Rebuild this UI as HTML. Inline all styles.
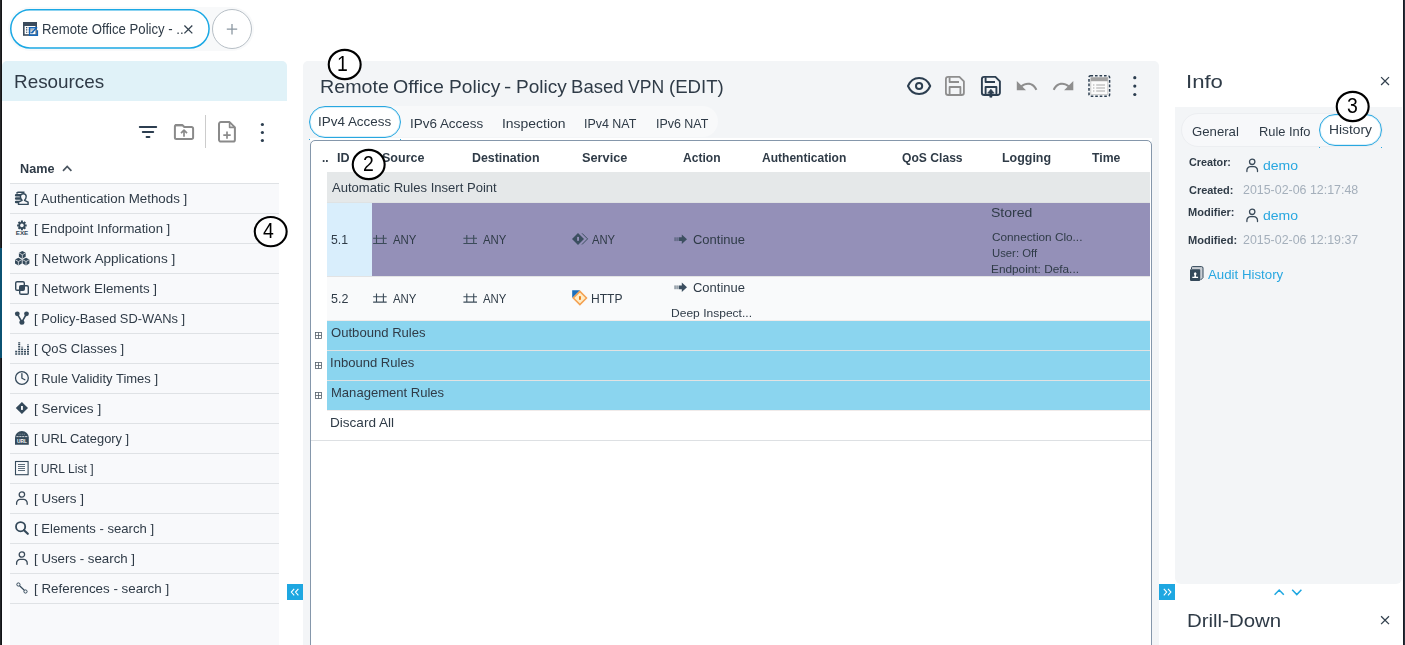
<!DOCTYPE html>
<html lang="en"><head><meta charset="utf-8"><title>Remote Office Policy - Policy Based VPN (EDIT)</title>
<style>
html,body{margin:0;padding:0;background:#fff;}
body{width:1405px;height:645px;overflow:hidden;font-family:"Liberation Sans",sans-serif;color:#2f3b47;}
#app{position:relative;width:1405px;height:645px;overflow:hidden;background:#fff;}
#app div,#app span,#app svg{position:absolute;box-sizing:border-box;}
.t{white-space:pre;line-height:1;transform-origin:0 0;}
.edgeL{left:0;top:0;width:2px;height:645px;background:linear-gradient(90deg,#262729 0,#262729 50%,#141517 50%);}
.edgeL i{position:absolute;left:0;width:2px;top:248px;height:110px;background:#0b5272;}
.edgeR{left:1403px;top:0;width:2px;height:645px;background:linear-gradient(90deg,#181c25 0,#181c25 50%,#2a303a 50%);}
.tabsbg{left:8px;top:7px;width:246px;height:44px;border-radius:22px;background:#f8f9fa;}
.maintab{left:10px;top:9px;width:200px;height:40px;border-radius:20px;background:#fff;}
.plus{left:212px;top:9px;width:40px;height:40px;border-radius:20px;border:1px solid #b7bfc6;background:#fff;}
.reshead{left:2px;top:61px;width:285px;height:40px;background:#e0f2f8;border-radius:5px 5px 0 0;}
.vdiv{left:205px;top:115px;width:1px;height:33px;background:#cccccc;}
.list{left:10px;top:183px;width:269px;height:462px;background:#f8f9fb;}
.list div{left:0;width:269px;height:1px;background:#dfe2e5;}
.cpanel{left:303px;top:61px;width:856px;height:600px;background:#f3f5f7;border-radius:5px 5px 0 0;}
.ctabs{left:309px;top:106px;width:409px;height:31px;border-radius:16px;background:#f8f9fa;}
.pill{border:1px solid #28a7e0;background:#fff;border-radius:17px;box-shadow:inset 0 0 0 1px rgba(40,167,224,.18);}
.table{left:310px;top:140px;width:842px;height:520px;border:1px solid #8597ab;border-radius:5px 5px 0 0;background:#fff;}
.row{left:327px;width:823px;}
.ipanel{left:1175px;top:107px;width:227px;height:477px;background:#f3f5f7;border-radius:0 0 6px 6px;}
.itabs{left:1181px;top:113px;width:202px;height:34px;border-radius:17px;background:#f7f8fa;border:1px solid #eceef1;}
.btn{width:16px;height:16px;background:#1ea7e1;}
#texts{left:0;top:0;width:1405px;height:645px;will-change:transform;}

</style></head>
<body>
<div id="app">
<div class="tabsbg"></div>
<div class="maintab"></div>
<div class="plus"></div>
<div class="reshead"></div>
<div class="vdiv"></div>
<div class="list">
<div style="top:0"></div><div style="top:30px"></div><div style="top:60px"></div><div style="top:90px"></div><div style="top:120px"></div><div style="top:150px"></div><div style="top:180px"></div><div style="top:210px"></div><div style="top:240px"></div><div style="top:270px"></div><div style="top:300px"></div><div style="top:330px"></div><div style="top:360px"></div><div style="top:390px"></div><div style="top:420px"></div>
</div>
<div class="cpanel"></div>
<div class="ctabs"></div>
<div class="pill" style="left:309px;top:106px;width:92px;height:32px;"></div>
<div style="left:310px;top:138px;width:842px;height:3px;background:#fff"></div>
<div style="left:309px;top:139px;width:1px;height:1px;background:#28a7e0"></div><div style="left:400px;top:139px;width:1px;height:1px;background:#28a7e0"></div>
<div class="table"></div>
<div class="row" style="top:172px;height:31px;background:#e5e8e9;border-bottom:1px solid #dfe2e3"></div>
<div class="row" style="top:203px;height:73px;background:#9490b8;"></div>
<div class="row" style="top:203px;height:73px;width:45px;background:#d9eefc;"></div>
<div class="row" style="top:276px;height:1px;background:#e2e3e4;"></div>
<div class="row" style="top:277px;height:43px;background:#f9fafb;"></div>
<div class="row" style="top:320px;height:1px;background:#f0ebea;"></div>
<div class="row" style="top:321px;height:29px;background:#8bd5ef;"></div>
<div class="row" style="top:350px;height:1px;background:#e2e2e2;"></div>
<div class="row" style="top:351px;height:29px;background:#8bd5ef;"></div>
<div class="row" style="top:380px;height:1px;background:#e2e2e2;"></div>
<div class="row" style="top:381px;height:29px;background:#8bd5ef;"></div>
<div class="row" style="top:410px;height:1px;background:#f0ebea;"></div>
<div style="left:311px;top:440px;width:840px;height:1px;background:#dde0e3;"></div>
<div class="ipanel"></div>
<div class="itabs"></div>
<div class="pill" style="left:1319px;top:114px;width:63px;height:32px;border-radius:16px"></div>
<div style="left:1319px;top:147px;width:1px;height:1px;background:#28a7e0"></div><div style="left:1381px;top:147px;width:1px;height:1px;background:#28a7e0"></div>
<div class="btn" style="left:287px;top:584px"></div>
<div class="btn" style="left:1159px;top:584px"></div>
<div class="edgeL"><i></i></div>
<div class="edgeR"></div>
<svg id="icons" width="1405" height="645" viewBox="0 0 1405 645" style="left:0;top:0">
<defs>
<g id="usr" fill="none" stroke="#3a4a59" stroke-width="1.3" stroke-linecap="round"><circle cx="6" cy="3.4" r="2.7"/><path d="M0.7 13.2v-1.3a3.6 3.6 0 0 1 3.6-3.6h3.4a3.6 3.6 0 0 1 3.6 3.6v1.3"/></g>
<g id="net" fill="none" stroke="#3c4c5a" stroke-width="1.1"><path d="M0 3.2h13.6M0 8.5h13.6M3.4 0v8.5M10.3 0v8.5"/></g>
<g id="arr" fill="#3c4f60"><rect x="0" y="2.8" width="0.9" height="3.8"/><rect x="2" y="2.8" width="0.9" height="3.8"/><path d="M4 2.8h3.2V0L12.4 4.7 7.2 9.4V6.6H4z"/></g>
<g id="cube"><path d="M0-3.9L3.4-2V2L0 3.9-3.4 2V-2z" fill="#34495a"/><path d="M-3.4-2L0 0 3.4-2M0 0V3.9" stroke="#f8f9fb" stroke-width="0.7" fill="none"/></g>
<g id="xx" stroke="#34424f" stroke-width="1.3"><path d="M0.200 0.300l7.900 7.900M8.100 0.300L0.200 8.200"/></g>
</defs>
<rect x="10.750" y="9.700" width="198.300" height="38.300" rx="19.150" fill="#fff" stroke="#1ba8e4" stroke-width="1.500"/>
<!-- top tab icon -->
<g>
<rect x="23" y="22" width="14" height="13.8" fill="#3b4b5c"/>
<rect x="24.600" y="26" width="10.800" height="8.200" fill="#fff"/>
<path d="M26 27.6h1.3M26 29.9h1.3M26 32.2h1.3" stroke="#3b4b5c" stroke-width="1.1"/>
<path d="M28.6 27.6h5M28.6 29.9h5M28.6 32.2h5" stroke="#3b4b5c" stroke-width="0.9"/>
<path d="M36 27.8h-6.4v7.4h7.8v-5" fill="#fff" fill-opacity="0.250" stroke="#1566b8" stroke-width="1.400"/>
<path d="M31.4 33.2l5.6-6" stroke="#1566b8" stroke-width="1.6"/>
</g>
<use href="#xx" x="184.2" y="25.2"/>
<path d="M226.8 29.2h10.4M232 24v10.4" stroke="#8b97a1" stroke-width="1.3"/>
<!-- resources toolbar -->
<path d="M139.8 127h16.4M142.8 132h10.4M146.6 137h2.8" stroke="#2c3e50" stroke-width="2" stroke-linecap="round"/>
<g fill="none" stroke="#8a8a8a" stroke-width="2" stroke-linejoin="round">
<path d="M174.900 137.400V126.500a1.500 1.500 0 0 1 1.500-1.500h5.900l2 2h7.300a1.500 1.500 0 0 1 1.500 1.500v8.900a1.500 1.500 0 0 1-1.500 1.500h-15.200a1.500 1.500 0 0 1-1.500-1.500z"/>
<path d="M184 136.8v-6M181 133.2l3-3 3 3" stroke-width="1.7"/>
<path d="M175 125.3h7.2" stroke-width="2.2"/>
<path d="M219 124a1.9 1.9 0 0 1 1.9-1.9h8.7l5.3 5.3v12.300000000000011a1.9 1.9 0 0 1-1.9 1.9h-12.1a1.9 1.9 0 0 1-1.9-1.9z"/>
<path d="M229.6 122.2v5.2h5.3" stroke-width="1.6"/>
<path d="M223.3 135.1h7.4M227 131.4v7.4" stroke-width="1.7"/>
</g>
<g fill="#2c3e50"><circle cx="262.4" cy="124.5" r="1.6"/><circle cx="262.4" cy="132.5" r="1.6"/><circle cx="262.4" cy="140.5" r="1.6"/></g>
<path d="M63 170.8l4.2-4.300000000000011 4.2 4.300000000000011" fill="none" stroke="#4a5560" stroke-width="1.7"/>
<!-- list icons -->
<g><!-- auth -->
<path d="M16.1 195.300h6M16.100 198.600h6M16.100 201.900h4.500" stroke="#34495a" stroke-width="2.500" stroke-linecap="round"/>
<path d="M16.400 193.400l1.600-1.100h6.500" stroke="#34495a" stroke-width="1.600" fill="none"/>
<path d="M18.500 204.400v-2.300l3.600-1.800c-1.100-1-1.700-2.100-1.700-3.700a2.900 2.900 0 0 1 5.800 0c0 1.600-.6 2.700-1.700 3.700l3.600 1.800v2.300z" fill="#f8f9fb" stroke="#34495a" stroke-width="1.400" stroke-linejoin="round"/>
</g>
<g><!-- endpoint gear -->
<g stroke="#34495a" stroke-width="2"><path d="M21.9 220.6v9.6M17.1 225.4h9.6M18.5 222l6.8 6.8M25.3 222l-6.8 6.8"/></g>
<circle cx="21.9" cy="225.4" r="3.5" fill="#34495a"/><circle cx="21.9" cy="225.4" r="1.8" fill="#f8f9fb"/>
<text x="15.7" y="234.9" font-family="Liberation Sans, sans-serif" font-weight="700" font-size="5.2" fill="#34495a" textLength="12.6" lengthAdjust="spacingAndGlyphs">EXE</text>
</g>
<use href="#cube" x="22.3" y="254.8"/><use href="#cube" x="18.4" y="261.6"/><use href="#cube" x="26" y="261.6"/>
<g fill="none" stroke="#34495a" stroke-width="1.4"><rect x="15.7" y="281.7" width="8.6" height="8.6" rx="1.4"/><rect x="19.7" y="285.7" width="8.6" height="8.6" rx="1.4"/><rect x="20.4" y="286.4" width="3.2" height="3.2" fill="#34495a"/></g>
<g><path d="M17.3 313.8l4.6 8.4 4.6-8.4" fill="none" stroke="#34495a" stroke-width="1.6"/><circle cx="17.3" cy="313.8" r="2.4" fill="#34495a"/><circle cx="26.5" cy="313.8" r="2.4" fill="#34495a"/><circle cx="21.9" cy="322.2" r="2.5" fill="#34495a"/></g>
<g stroke="#34495a" stroke-width="2" stroke-dasharray="1.6 0.8"><path d="M16.2 354.8v-4M19.2 354.8v-12.8M22.1 354.8v-8M25 354.8v-5.6M28 354.8v-10.4"/></g>
<g fill="none" stroke="#34495a" stroke-width="1.3"><circle cx="21.9" cy="378" r="6.4"/><path d="M21.9 373.6v4.6l3 1.6" stroke-linecap="round"/></g>
<g><path d="M21.9 401.9l6.1 6.1-6.1 6.1-6.1-6.1z" fill="#34495a"/><rect x="21" y="406" width="1.9" height="3.9" fill="#f8f9fb"/></g>
<g><!-- url cat -->
<path d="M15 444.8v-7.2a6.9 6.6 0 0 1 13.8 0v7.2z" fill="#34495a"/>
<path d="M16.4 436.6h11" stroke="#f8f9fb" stroke-width="0.8" stroke-dasharray="2.2 0.7"/>
<path d="M18.400000000000002 434.2h7" stroke="#f8f9fb" stroke-width="0.5" stroke-dasharray="1.2 0.6" opacity="0.7"/>
<text x="17" y="443.2" font-family="Liberation Sans, sans-serif" font-weight="700" font-size="5.4" fill="#fff" textLength="10" lengthAdjust="spacingAndGlyphs">URL</text>
</g>
<g fill="none" stroke="#34495a"><rect x="15.5" y="461.5" width="12.6" height="13.2" stroke-width="1.1"/><path d="M18 464.5h7M18 466.5h7M18 468.5h7M18 470.5h7" stroke-width="0.8"/></g>
<use href="#usr" x="15.9" y="491.1"/>
<g fill="none" stroke="#34495a"><circle cx="20.6" cy="526.7" r="4.6" stroke-width="1.8"/><path d="M24 530.2l3.8 3.6" stroke-width="2.2" stroke-linecap="round"/></g>
<use href="#usr" x="15.9" y="551.1"/>
<g fill="none" stroke="#34495a" stroke-width="1"><circle cx="18.4" cy="584.5" r="1.6"/><circle cx="25.5" cy="591.5" r="1.6"/><path d="M19.6 585.7l4.7 4.6" stroke-width="1.2"/></g>
<!-- center toolbar -->
<g fill="none" stroke="#2c3e50" stroke-width="2"><path d="M908 86C912.500 75.300 925.700 75.300 930.200 86C925.700 96.700 912.500 96.700 908 86z" stroke-linejoin="round"/><circle cx="919.1" cy="86" r="3.1"/></g>
<g id="sv" fill="none" stroke="#8e8e8e" stroke-width="1.8" stroke-linejoin="round">
<path d="M945.900 79.200a2.300 2.300 0 0 1 2.300-2.300h11.200l4.500 4.500v11.300a2.300 2.300 0 0 1-2.300 2.300h-13.400a2.300 2.300 0 0 1-2.300-2.300z"/>
<path d="M949.600 77.300v4.700h9.400"/><path d="M949.600 94.600v-7.600h10.800v7.600"/>
</g>
<g fill="none" stroke="#2c3e50" stroke-width="1.9" stroke-linejoin="round">
<path d="M981.900 79.200a2.300 2.300 0 0 1 2.300-2.300h11.200l4.500 4.500v11.300a2.300 2.300 0 0 1-2.300 2.300h-13.400a2.300 2.300 0 0 1-2.300-2.300z"/>
<path d="M985.600 77.300v4.700h9.400"/><path d="M985.600 94.600v-7.600h10.800v7.600"/>
<path d="M990.900 89.200l3.300 4h-2.200v4h-2.200v-4h-2.200z" fill="#2c3e50" stroke-width="0.6"/>
</g>
<g fill="#8e8e8e"><path d="M1016.800 81v9.200h9.200l-3.500-3.500c1.600-1.300 3.400-2 5.500-2c3.300 0 6 2 7.400 5.500l1.900-.7c-1.600-4.200-5.100-6.800-9.300-6.800c-2.600 0-5 .9-6.900 2.600z"/>
<path d="M1073.300 81v9.200h-9.200l3.500-3.500c-1.600-1.300-3.400-2-5.500-2c-3.300 0-6 2-7.400 5.500l-1.900-.7c1.600-4.200 5.100-6.800 9.300-6.800c2.600 0 5 .9 6.900 2.600z"/></g>
<g><rect x="1089" y="75.800" width="20.600" height="20.400" fill="#f3f5f7" stroke="#2c3e50" stroke-width="1.5" stroke-dasharray="2.6 1.9" rx="1.5"/>
<rect x="1090.800" y="77.600" width="17" height="16.800" fill="#fbfbfb" stroke="#c4c4c4" stroke-width="0.8"/>
<rect x="1090.800" y="77.400" width="17" height="3.800" fill="#a2a2a2"/>
<path d="M1096.200 85h8.800M1096.200 88h8.800M1096.200 91h8.800" stroke="#a8a8a8" stroke-width="1.2"/>
<path d="M1093 85h1.400M1093 88h1.400M1093 91h1.400" stroke="#a8a8a8" stroke-width="1.200"/></g>
<g fill="#2c3e50"><circle cx="1134.800" cy="77.700" r="1.600"/><circle cx="1134.800" cy="86.100" r="1.600"/><circle cx="1134.800" cy="94.500" r="1.600"/></g>
<!-- table icons -->
<use href="#net" x="373.100" y="235"/><use href="#net" x="463.400" y="235"/>
<use href="#net" x="373.100" y="293.600"/><use href="#net" x="463.400" y="293.600"/>
<g><path d="M582 233.300l5.600 5.600-5.600 5.600" fill="none" stroke="#3c4f60" stroke-width="1"/><path d="M578 232.900l6 6-6 6-6-6z" fill="#3c4f60"/><rect x="577.100" y="236.900" width="1.900" height="3.900" fill="#9490b8"/></g>
<g><path d="M572.200 290.200h8l-8 7.800z" fill="#1b6fbd"/><path d="M579.900 291.400l6.600 6.600-6.600 6.600-6.600-6.600z" fill="#fdecc8" stroke="#f4a050" stroke-width="1.500"/><rect x="579" y="295.900" width="1.900" height="4.100" rx="0.800" fill="#f07b10"/></g>
<use href="#arr" x="674.600" y="234.500"/><use href="#arr" x="674.600" y="282.600"/>
<g fill="#fff" stroke="#55606a" stroke-width="0.800"><rect x="315.500" y="332.500" width="6" height="6"/><rect x="315.500" y="362.500" width="6" height="6"/><rect x="315.500" y="392.500" width="6" height="6"/><path d="M315.500 335.500h6M318.500 332.500v6M315.500 365.500h6M318.500 362.500v6M315.500 395.500h6M318.500 392.500v6"/></g>
<!-- info -->
<use href="#xx" x="1380.900" y="76.800"/><use href="#xx" x="1380.900" y="615.900"/>
<use href="#usr" x="1246.200" y="158.400"/><use href="#usr" x="1246.200" y="208.400"/>
<g><path d="M1191.500 269v-1.400a1 1 0 0 1 1-1h9a1.500 1.500 0 0 1 1.500 1.500v9.500l-2.500 2.500" fill="#c9ced4" stroke="#34495a" stroke-width="1"/><rect x="1190" y="269.200" width="10.200" height="11.700" rx="0.800" fill="#34495a"/><path d="M1192.300 278v-1.300h1.900c.5-.8.300-1.300-.1-2.100a1.300 1.500 0 1 1 2.200 0c-.4.800-.6 1.300-.1 2.100h1.900v1.300z" fill="#fff"/></g>
<g fill="none" stroke="#1ea7e1" stroke-width="1.500"><path d="M1274.600 594.800l4.600-4.800 4.600 4.800M1292.200 589.800l4.600 4.800 4.600-4.800"/></g>
<g fill="none" stroke="#fff" stroke-width="1.100"><path d="M294.200 588.800l-2.900 3.300 2.900 3.300M298.400 588.800l-2.900 3.300 2.900 3.300M1163.800 588.800l2.900 3.300-2.900 3.300M1168 588.800l2.900 3.300-2.900 3.300"/></g>
</svg>

<div id="texts">
<span class="t" style="left:42.06px;top:22.00px;font-size:14px;transform:scaleX(0.9401)">Remote Office Policy - ..</span>
<span class="t" style="left:13.71px;top:73.00px;font-size:18.4px;transform:scaleX(1.0268)">Resources</span>
<span class="t" style="left:20.03px;top:162.00px;font-size:13px;transform:scaleX(0.9721);font-weight:700">Name</span>
<span class="t" style="left:33.73px;top:192.00px;font-size:13px;transform:scaleX(1.0240)">[ Authentication Methods ]</span>
<span class="t" style="left:33.74px;top:222.00px;font-size:13px;transform:scaleX(1.0139)">[ Endpoint Information ]</span>
<span class="t" style="left:33.71px;top:252.00px;font-size:13px;transform:scaleX(1.0454)">[ Network Applications ]</span>
<span class="t" style="left:33.73px;top:282.00px;font-size:13px;transform:scaleX(1.0258)">[ Network Elements ]</span>
<span class="t" style="left:33.76px;top:312.00px;font-size:13px;transform:scaleX(0.9904)">[ Policy-Based SD-WANs ]</span>
<span class="t" style="left:33.75px;top:342.00px;font-size:13px;transform:scaleX(0.9977)">[ QoS Classes ]</span>
<span class="t" style="left:33.75px;top:372.00px;font-size:13px;transform:scaleX(1.0004)">[ Rule Validity Times ]</span>
<span class="t" style="left:33.71px;top:402.00px;font-size:13px;transform:scaleX(1.0448)">[ Services ]</span>
<span class="t" style="left:33.76px;top:432.00px;font-size:13px;transform:scaleX(0.9873)">[ URL Category ]</span>
<span class="t" style="left:33.55px;top:462.00px;font-size:13px;transform:scaleX(0.9355)">[ URL List ]</span>
<span class="t" style="left:33.72px;top:492.00px;font-size:13px;transform:scaleX(1.0321)">[ Users ]</span>
<span class="t" style="left:33.74px;top:522.00px;font-size:13px;transform:scaleX(1.0068)">[ Elements - search ]</span>
<span class="t" style="left:33.73px;top:552.00px;font-size:13px;transform:scaleX(1.0211)">[ Users - search ]</span>
<span class="t" style="left:33.73px;top:582.00px;font-size:13px;transform:scaleX(1.0274)">[ References - search ]</span>
<span class="t" style="left:319.65px;top:78.00px;font-size:18.4px;transform:scaleX(1.0707)">Remote</span>
<span class="t" style="left:393.20px;top:78.00px;font-size:18.4px;transform:scaleX(1.0649)">Office</span>
<span class="t" style="left:448.68px;top:78.00px;font-size:18.4px;transform:scaleX(1.0453)">Policy</span>
<span class="t" style="left:503.59px;top:78.00px;font-size:18.4px;transform:scaleX(1.1790)">-</span>
<span class="t" style="left:515.69px;top:78.00px;font-size:18.4px;transform:scaleX(1.0358)">Policy</span>
<span class="t" style="left:570.98px;top:78.00px;font-size:18.4px;transform:scaleX(1.0101)">Based</span>
<span class="t" style="left:628.01px;top:78.00px;font-size:18.4px;transform:scaleX(0.9542)">VPN</span>
<span class="t" style="left:669.49px;top:78.00px;font-size:18.4px;transform:scaleX(1.0116)">(EDIT)</span>
<span class="t" style="left:317.96px;top:115.00px;font-size:13px;transform:scaleX(1.0341)">IPv4 Access</span>
<span class="t" style="left:409.96px;top:117.00px;font-size:13px;transform:scaleX(1.0341)">IPv6 Access</span>
<span class="t" style="left:501.91px;top:117.00px;font-size:13px;transform:scaleX(1.0716)">Inspection</span>
<span class="t" style="left:584.30px;top:117.00px;font-size:13px;transform:scaleX(0.9577)">IPv4 NAT</span>
<span class="t" style="left:656.30px;top:117.00px;font-size:13px;transform:scaleX(0.9577)">IPv6 NAT</span>
<span class="t" style="left:321.58px;top:151.00px;font-size:13px;transform:scaleX(0.9091);font-weight:700">..</span>
<span class="t" style="left:337.28px;top:151.00px;font-size:13px;transform:scaleX(0.9657);font-weight:700">ID</span>
<span class="t" style="left:382.02px;top:151.00px;font-size:13px;transform:scaleX(0.9628);font-weight:700">Source</span>
<span class="t" style="left:472.04px;top:151.00px;font-size:13px;transform:scaleX(0.9531);font-weight:700">Destination</span>
<span class="t" style="left:582.01px;top:151.00px;font-size:13px;transform:scaleX(0.9812);font-weight:700">Service</span>
<span class="t" style="left:682.52px;top:151.00px;font-size:13px;transform:scaleX(0.9274);font-weight:700">Action</span>
<span class="t" style="left:762.28px;top:151.00px;font-size:13px;transform:scaleX(0.9259);font-weight:700">Authentication</span>
<span class="t" style="left:902.03px;top:151.00px;font-size:13px;transform:scaleX(0.9320);font-weight:700">QoS Class</span>
<span class="t" style="left:1002.29px;top:151.00px;font-size:13px;transform:scaleX(0.9566);font-weight:700">Logging</span>
<span class="t" style="left:1092.25px;top:151.00px;font-size:13px;transform:scaleX(0.9408);font-weight:700">Time</span>
<span class="t" style="left:331.50px;top:181.00px;font-size:13px;transform:scaleX(1.0040)">Automatic Rules Insert Point</span>
<span class="t" style="left:330.54px;top:233.00px;font-size:13px;transform:scaleX(0.9405)">5.1</span>
<span class="t" style="left:392.51px;top:233.00px;font-size:13px;transform:scaleX(0.8781)">ANY</span>
<span class="t" style="left:482.51px;top:233.00px;font-size:13px;transform:scaleX(0.8762)">ANY</span>
<span class="t" style="left:592.27px;top:233.00px;font-size:13px;transform:scaleX(0.8648)">ANY</span>
<span class="t" style="left:692.75px;top:233.00px;font-size:13px;transform:scaleX(0.9980)">Continue</span>
<span class="t" style="left:991.45px;top:206.00px;font-size:13px;transform:scaleX(1.0803)">Stored</span>
<span class="t" style="left:992.21px;top:232.00px;font-size:11.1px;transform:scaleX(1.0623)">Connection Clo...</span>
<span class="t" style="left:992.23px;top:248.00px;font-size:11.1px;transform:scaleX(1.0197)">User: Off</span>
<span class="t" style="left:991.44px;top:264.00px;font-size:11.1px;transform:scaleX(1.0644)">Endpoint: Defa...</span>
<span class="t" style="left:330.53px;top:292.00px;font-size:13px;transform:scaleX(0.9585)">5.2</span>
<span class="t" style="left:392.51px;top:292.00px;font-size:13px;transform:scaleX(0.8781)">ANY</span>
<span class="t" style="left:482.51px;top:292.00px;font-size:13px;transform:scaleX(0.8762)">ANY</span>
<span class="t" style="left:591.33px;top:292.00px;font-size:13px;transform:scaleX(0.9287)">HTTP</span>
<span class="t" style="left:692.75px;top:281.00px;font-size:13px;transform:scaleX(0.9980)">Continue</span>
<span class="t" style="left:671.42px;top:308.00px;font-size:11.1px;transform:scaleX(1.0852)">Deep Inspect...</span>
<span class="t" style="left:330.50px;top:326.00px;font-size:13px;transform:scaleX(1.0070)">Outbound Rules</span>
<span class="t" style="left:329.75px;top:356.00px;font-size:13px;transform:scaleX(1.0049)">Inbound Rules</span>
<span class="t" style="left:330.50px;top:386.00px;font-size:13px;transform:scaleX(1.0036)">Management Rules</span>
<span class="t" style="left:330.45px;top:416.00px;font-size:13px;transform:scaleX(1.0429)">Discard All</span>
<span class="t" style="left:1185.89px;top:73.00px;font-size:18.4px;transform:scaleX(1.2035)">Info</span>
<span class="t" style="left:1191.99px;top:125.00px;font-size:13px;transform:scaleX(1.0134)">General</span>
<span class="t" style="left:1258.51px;top:125.00px;font-size:13px;transform:scaleX(0.9901)">Rule Info</span>
<span class="t" style="left:1329.17px;top:123.00px;font-size:13px;transform:scaleX(1.0637)">History</span>
<span class="t" style="left:1188.51px;top:157.00px;font-size:11.1px;transform:scaleX(0.9725);font-weight:700">Creator:</span>
<span class="t" style="left:1263.45px;top:159.00px;font-size:13px;transform:scaleX(1.0794);color:#28a7e0">demo</span>
<span class="t" style="left:1188.51px;top:185.00px;font-size:11.1px;transform:scaleX(0.9874);font-weight:700">Created:</span>
<span class="t" style="left:1242.53px;top:183.00px;font-size:13px;transform:scaleX(0.9544);color:#a4afbb">2015-02-06 12:17:48</span>
<span class="t" style="left:1187.50px;top:207.00px;font-size:11.1px;transform:scaleX(0.9934);font-weight:700">Modifier:</span>
<span class="t" style="left:1263.45px;top:209.00px;font-size:13px;transform:scaleX(1.0794);color:#28a7e0">demo</span>
<span class="t" style="left:1187.50px;top:235.00px;font-size:11.1px;transform:scaleX(0.9969);font-weight:700">Modified:</span>
<span class="t" style="left:1242.53px;top:233.00px;font-size:13px;transform:scaleX(0.9544);color:#a4afbb">2015-02-06 12:19:37</span>
<span class="t" style="left:1208.25px;top:268.00px;font-size:13px;transform:scaleX(1.0204);color:#28a7e0">Audit History</span>
<span class="t" style="left:1186.85px;top:612.00px;font-size:18.4px;transform:scaleX(1.1100)">Drill-Down</span>
</div>
<svg width="1405" height="645" viewBox="0 0 1405 645" style="left:0;top:0"><ellipse cx="344.7" cy="64.5" rx="15.95" ry="14.65" fill="#fff" stroke="#000" stroke-width="2.1"/><ellipse cx="368.7" cy="164.5" rx="15.95" ry="14.65" fill="#fff" stroke="#000" stroke-width="2.1"/><ellipse cx="1352.7" cy="106.5" rx="15.95" ry="14.65" fill="#fff" stroke="#000" stroke-width="2.1"/><ellipse cx="270.7" cy="231.6" rx="15.95" ry="14.65" fill="#fff" stroke="#000" stroke-width="2.1"/></svg>
<div id="nums" style="left:0;top:0;width:1405px;height:645px;will-change:transform">
<span class="t" style="left:337.10px;top:53.00px;font-size:21.6px;color:#000;transform:scaleX(0.9000)">1</span>
<span class="t" style="left:363.10px;top:153.00px;font-size:21.6px;color:#000;transform:scaleX(0.9000)">2</span>
<span class="t" style="left:1346.70px;top:95.00px;font-size:21.6px;color:#000;transform:scaleX(0.9000)">3</span>
<span class="t" style="left:263.10px;top:220.00px;font-size:21.6px;color:#000;transform:scaleX(0.9000)">4</span>
</div>
</div>
</body></html>
